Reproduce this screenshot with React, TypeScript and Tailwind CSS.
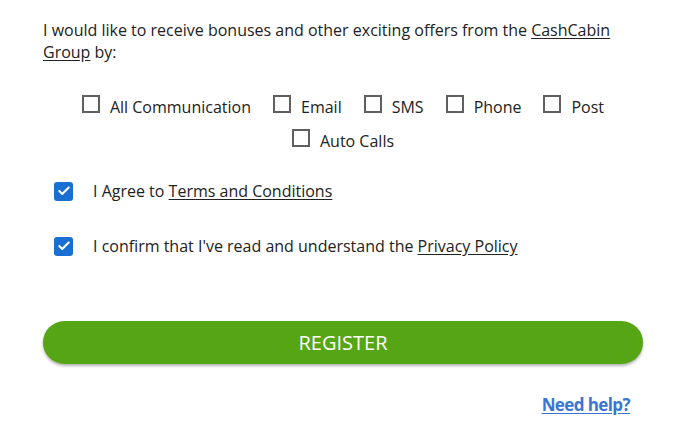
import { Check } from "lucide-react";

const channels = ["All Communication", "Email", "SMS", "Phone", "Post", "Auto Calls"];

function Box() {
  return <span className="mt-[-6px] inline-block h-[18px] w-[18px] shrink-0 border-2 border-[#5f5f5f] bg-white" />;
}

function Checked() {
  return (
    <span className="flex h-[19px] w-[19px] shrink-0 items-center justify-center rounded-[3px] bg-[#1a6fd2]">
      <Check className="h-[14px] w-[14px] text-white" strokeWidth={3.5} />
    </span>
  );
}

export default function App() {
  return (
    <div className="min-h-screen bg-white font-['Open_Sans',sans-serif] text-[#222]">
      <div className="w-[600px] ml-[43px] pt-[19px]">
        <p className="text-[16px] leading-[22px]">
          I would like to receive bonuses and other exciting offers from the{" "}
          <a className="underline underline-offset-2">CashCabin</a>{" "}
          <a className="underline underline-offset-2">Group</a> by:
        </p>

        <div className="mt-[33px] flex flex-wrap justify-center gap-x-[22px] gap-y-[12px] px-[36px] text-[16px] leading-[22px]">
          {channels.map((c) => (
            <label key={c} className="flex items-center gap-[10px]">
              <Box />
              <span>{c}</span>
            </label>
          ))}
        </div>

        <div className="mt-[28px] flex flex-col gap-[33px] pl-[11px] text-[16px] leading-[22px]">
          <label className="flex items-center gap-[20px]">
            <Checked />
            <span>
              I Agree to <a className="underline underline-offset-2">Terms and Conditions</a>
            </span>
          </label>
          <label className="flex items-center gap-[20px]">
            <Checked />
            <span>
              I confirm that I've read and understand the{" "}
              <a className="underline underline-offset-2">Privacy Policy</a>
            </span>
          </label>
        </div>

        <button className="mt-[64px] flex h-[43px] w-full items-center justify-center rounded-full bg-[#56a514] text-[20px] text-white shadow-[0_2px_3px_rgba(0,0,0,0.3)]">
          REGISTER
        </button>

        <div className="mt-[28px] flex justify-end pr-[13px]">
          <a className="text-[17px] font-bold tracking-[-0.6px] text-[#3a75d6] underline underline-offset-2">
            Need help?
          </a>
        </div>
      </div>
    </div>
  );
}
